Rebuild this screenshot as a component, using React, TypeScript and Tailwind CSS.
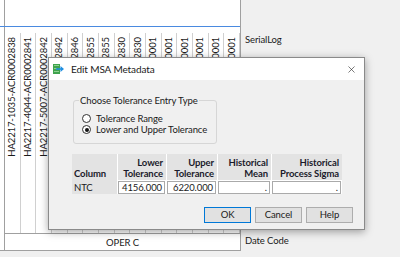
import { X } from "lucide-react";

const COLUMNS = [
  "HA2217-1035-ACR0002838",
  "HA2217-4044-ACR0002841",
  "HA2217-5007-ACR0002842",
  "HA2217-5011-ACR0002842",
  "HA2217-5012-ACR0002846",
  "HA2217-5020-ACR0002855",
  "HA2217-5021-ACR0002855",
  "HA2217-6001-ACR0002830",
  "HA2217-6002-ACR0002830",
  "HA2217-7001-ACR0000001",
  "HA2217-7002-ACR0000001",
  "HA2217-7003-ACR0000001",
  "HA2217-7004-ACR0000001",
  "HA2217-7005-ACR0000001",
  "HA2217-7006-ACR0000001",
];

function DialogIcon() {
  return (
    <svg width="11" height="10" viewBox="0 0 11 10" aria-hidden>
      <rect x="0" y="0" width="7" height="10" fill="#3fa34d" />
      <rect x="1" y="1" width="5" height="1" fill="#8fd18f" />
      <rect x="1" y="4" width="3" height="1" fill="#8fd18f" />
      <rect x="1" y="7" width="5" height="1" fill="#8fd18f" />
      <path d="M3 4.2h4.5V2L11 5 7.5 8V5.8H3z" fill="#1f8fe0" />
    </svg>
  );
}

function Radio({ checked, label }: { checked?: boolean; label: string }) {
  return (
    <div className="flex h-[11px] items-center gap-[5px] pl-[8px]">
      <span className="flex size-[9px] items-center justify-center rounded-full border border-[#333] bg-white">
        {checked && <span className="size-[4px] rounded-full bg-[#111]" />}
      </span>
      <span>{label}</span>
    </div>
  );
}

export default function App() {
  return (
    <div className="relative h-[257px] w-[400px] overflow-hidden bg-[#f0f0f0] font-['Lato',sans-serif] text-[9.5px] leading-[11px] tracking-[-0.1px] text-[#1a1a1a]">
      <div className="flex h-[251px]">
        {/* data table behind the dialog */}
        <div className="flex w-[241px] flex-col border-r border-b border-[#a0a0a0] bg-white">
          <div className="ml-[4px] h-[26px] border-l border-[#a0a0a0]" />
          <div className="h-px bg-[#4a8ae0]" />
          <div className="ml-[4px] flex flex-1 flex-col border-l border-[#a0a0a0]">
            <div className="h-[6px]" />
            <div className="grid h-[200px] grid-cols-15">
              {COLUMNS.map((c, i) => (
                <div key={i} className="border-r border-[#d0d0d0]">
                  <div className="flex h-[127px] flex-col items-center justify-end overflow-hidden pb-[3px]">
                    <span className="rotate-180 whitespace-nowrap leading-[12px] [writing-mode:vertical-rl]">
                      {c}
                    </span>
                  </div>
                </div>
              ))}
            </div>
            <div className="flex h-[17px] items-center justify-center border-t border-[#a0a0a0]">
              OPER C
            </div>
          </div>
        </div>
        <div className="flex flex-1 flex-col justify-between pt-[34px] pb-[4px] pl-[4px] leading-[12px]">
          <span>SerialLog</span>
          <span>Date Code</span>
        </div>
      </div>

      {/* Edit MSA Metadata dialog */}
      <div className="absolute top-[57px] left-[48px] flex h-[173px] w-[317px] flex-col border border-[#8a8a8a] bg-[#f0f0f0] shadow-[0_2px_8px_rgba(0,0,0,0.35)]">
        <div className="flex h-[22px] items-center bg-white pr-[7px] pl-[4px]">
          <DialogIcon />
          <span className="ml-[7px] flex-1 text-[10px]">Edit MSA Metadata</span>
          <X className="size-[11px] text-[#222]" strokeWidth={1.3} aria-hidden />
        </div>

        <fieldset className="mt-[15px] ml-[24px] w-[144px] rounded-[3px] border border-[#d6d6d6] pt-[7px] pb-[8px]">
          <legend className="ml-[5px] px-px">Choose Tolerance Entry Type</legend>
          <Radio label="Tolerance Range" />
          <Radio checked label="Lower and Upper Tolerance" />
        </fieldset>

        <div className="mt-[10px] ml-[23px] w-[270px]">
          <div className="grid h-[26px] grid-cols-[45px_49px_51px_54px_71px] bg-[#e3e3e3] font-bold text-[#1b1b2b]">
            <div className="flex flex-col justify-end pb-px pl-[2px]">Column</div>
            <div className="flex flex-col items-end justify-end border-l border-white pr-[3px] pb-px">
              <span>Lower</span>
              <span>Tolerance</span>
            </div>
            <div className="flex flex-col items-end justify-end border-l border-white pr-[3px] pb-px">
              <span>Upper</span>
              <span>Tolerance</span>
            </div>
            <div className="flex flex-col items-end justify-end border-l border-white pr-[3px] pb-px">
              <span>Historical</span>
              <span>Mean</span>
            </div>
            <div className="flex flex-col items-end justify-end border-l border-white pr-[3px] pb-px">
              <span>Historical</span>
              <span>Process Sigma</span>
            </div>
          </div>
          <div className="grid h-[14px] grid-cols-[45px_49px_51px_54px_71px] bg-white">
            <div className="flex items-center bg-[#e3e3e3] pl-[2px]">NTC</div>
            {["4156.000", "6220.000", ".", "."].map((v, i) => (
              <div key={i} className="flex items-center px-px">
                <div className="flex h-[13px] w-full items-center justify-end border border-[#aaa] pr-[2px]">
                  {v}
                </div>
              </div>
            ))}
          </div>
        </div>

        <div className="mt-[13px] flex justify-end gap-[4px] pr-[11px]">
          <button type="button" className="h-[16px] w-[47px] border border-[#0078d7] bg-[#e1e1e1] leading-[14px]">
            OK
          </button>
          <button type="button" className="h-[16px] w-[47px] border border-[#adadad] bg-[#e1e1e1] leading-[14px]">
            Cancel
          </button>
          <button type="button" className="h-[16px] w-[47px] border border-[#adadad] bg-[#e1e1e1] leading-[14px]">
            Help
          </button>
        </div>
      </div>
    </div>
  );
}
